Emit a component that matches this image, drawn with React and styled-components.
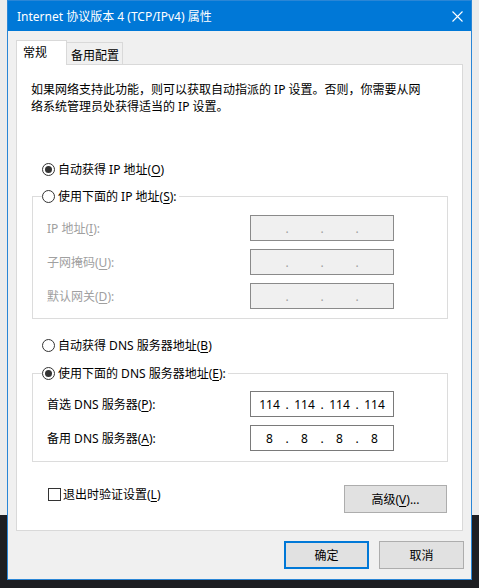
import React from 'react'
import styled, { createGlobalStyle } from 'styled-components'

const GlobalStyle = createGlobalStyle`
  html, body {
    margin: 0;
    padding: 0;
  }
  body {
    width: 479px;
    height: 588px;
    overflow: hidden;
    background: linear-gradient(to bottom, #ececec 0, #ececec 515px, #1d1e22 515px);
    font-family: "Noto Sans", "Noto Sans CJK SC", sans-serif;
    font-size: 12px;
    color: #000;
  }
`

const Desktop = styled.div`
  padding-left: 7px;
`

const Window = styled.div`
  width: 465px;
  box-sizing: border-box;
  border: 1px solid #2a86d6;
  background: #f0f0f0;
  display: flex;
  flex-direction: column;
`

const TitleBar = styled.div`
  height: 30px;
  background: #0078d7;
  color: #fff;
  display: flex;
  align-items: center;
  justify-content: space-between;
  padding: 0 8px 0 9px;
  line-height: 17px;
`

const Body = styled.div`
  padding: 9px 7px 10px 8px;
  display: flex;
  flex-direction: column;
`

const TabList = styled.div`
  display: flex;
  align-items: flex-end;
  height: 25px;
  margin-bottom: -1px;
  position: relative;
  z-index: 1;
`

const Tab = styled.div`
  box-sizing: border-box;
  height: ${p => (p.$active ? 25 : 23)}px;
  width: ${p => (p.$active ? 51 : 56)}px;
  padding: ${p => (p.$active ? '3px 0 0 6px' : '4px 0 0 4px')};
  line-height: 17px;
  background: ${p => (p.$active ? '#fff' : '#f0f0f0')};
  border: 1px solid #d9d9d9;
  border-bottom: ${p => (p.$active ? 'none' : '1px solid #d9d9d9')};
  border-left: ${p => (p.$active ? '1px solid #d9d9d9' : 'none')};
`

const Panel = styled.div`
  background: #fff;
  border: 1px solid #d9d9d9;
  margin-right: 1px;
  padding: 16px 14px 17px 15px;
  display: flex;
  flex-direction: column;
`

const Description = styled.p`
  margin: 0 0 0 -1px;
  line-height: 17px;
  white-space: nowrap;
`

const Choice = styled.label`
  display: flex;
  align-items: center;
  gap: 3px;
  line-height: 17px;
  margin: ${p => p.$top || 0}px 0 0 10px;
  white-space: nowrap;
`

const RadioMark = styled.span`
  width: 13px;
  height: 13px;
  box-sizing: border-box;
  border: 1px solid #333;
  border-radius: 50%;
  background: #fff;
  display: flex;
  align-items: center;
  justify-content: center;
  &::after {
    content: '';
    width: 7px;
    height: 7px;
    border-radius: 50%;
    background: ${p => (p.$checked ? '#333' : 'transparent')};
  }
`

const CheckMark = styled.span`
  width: 13px;
  height: 13px;
  box-sizing: border-box;
  border: 1px solid #333;
  background: #fff;
`

const Key = styled.u`
  text-decoration: underline;
  text-underline-offset: 2px;
`

const Group = styled.fieldset`
  margin: ${p => p.$top}px 0 0;
  padding: 0;
  border: 1px solid #dcdcdc;
  min-width: 0;
`

const Legend = styled.legend`
  margin-left: 9px;
  padding: 0 2px 0 0;
  & > label {
    margin: 0;
  }
`

const Fields = styled.div`
  display: grid;
  grid-template-columns: 203px 144px;
  grid-auto-rows: 26px;
  row-gap: 8px;
  padding: ${p => p.$pad};
  align-items: center;
`

const FieldLabel = styled.span`
  color: ${p => (p.$disabled ? '#a0a0a0' : '#000')};
  line-height: 17px;
  white-space: nowrap;
`

const IpBox = styled.div`
  box-sizing: border-box;
  height: 26px;
  border: 1px solid ${p => (p.$disabled ? '#8a8a8a' : '#7a7a7a')};
  background: ${p => (p.$disabled ? '#f0f0f0' : '#fff')};
  color: ${p => (p.$disabled ? '#a0a0a0' : '#000')};
  display: flex;
  align-items: center;
  padding-left: 3px;
  line-height: 17px;
`

const Octet = styled.span`
  width: 31px;
  text-align: center;
`

const Dot = styled.span`
  width: 4px;
  text-align: center;
`

const Footer = styled.div`
  display: flex;
  justify-content: space-between;
  align-items: flex-start;
  margin-top: 23px;
  & > label {
    margin: 1px 0 0 16px;
    gap: 2px;
  }
`

const Button = styled.button`
  box-sizing: border-box;
  width: ${p => p.$w || 85}px;
  height: 28px;
  margin: 0;
  padding: 0;
  font: inherit;
  color: #000;
  background: #e1e1e1;
  border: ${p => (p.$primary ? '2px solid #0078d7' : '1px solid #adadad')};
`

const Actions = styled.div`
  display: flex;
  justify-content: flex-end;
  gap: 10px;
  margin-top: 10px;
`

const Ip = ({ parts, disabled }) => (
  <IpBox $disabled={disabled}>
    {parts.map((p, i) => (
      <React.Fragment key={i}>
        {i > 0 && <Dot>.</Dot>}
        <Octet>{p}</Octet>
      </React.Fragment>
    ))}
  </IpBox>
)

const empty = ['', '', '', '']

export default function App() {
  return (
    <Desktop>
      <GlobalStyle />
      <Window>
        <TitleBar>
          <span>Internet 协议版本 4 (TCP/IPv4) 属性</span>
          <svg width="11" height="11" viewBox="0 0 11 11">
            <path d="M0.5 0.5L10.5 10.5M10.5 0.5L0.5 10.5" stroke="#fff" strokeWidth="1.1" />
          </svg>
        </TitleBar>
        <Body>
          <TabList>
            <Tab $active>常规</Tab>
            <Tab>备用配置</Tab>
          </TabList>
          <Panel>
            <Description>
              如果网络支持此功能，则可以获取自动指派的 IP 设置。否则，你需要从网
              <br />
              络系统管理员处获得适当的 IP 设置。
            </Description>

            <Choice $top={46}>
              <RadioMark $checked />
              <span>自动获得 IP 地址(<Key>O</Key>)</span>
            </Choice>

            <Group $top={10}>
              <Legend>
                <Choice>
                  <RadioMark />
                  <span>使用下面的 IP 地址(<Key>S</Key>):</span>
                </Choice>
              </Legend>
              <Fields $pad="10px 0 9px 14px">
                <FieldLabel $disabled>IP 地址(<Key>I</Key>):</FieldLabel>
                <Ip parts={empty} disabled />
                <FieldLabel $disabled>子网掩码(<Key>U</Key>):</FieldLabel>
                <Ip parts={empty} disabled />
                <FieldLabel $disabled>默认网关(<Key>D</Key>):</FieldLabel>
                <Ip parts={empty} disabled />
              </Fields>
            </Group>

            <Choice $top={18}>
              <RadioMark />
              <span>自动获得 DNS 服务器地址(<Key>B</Key>)</span>
            </Choice>

            <Group $top={11}>
              <Legend>
                <Choice>
                  <RadioMark $checked />
                  <span>使用下面的 DNS 服务器地址(<Key>E</Key>):</span>
                </Choice>
              </Legend>
              <Fields $pad="9px 0 10px 14px">
                <FieldLabel>首选 DNS 服务器(<Key>P</Key>):</FieldLabel>
                <Ip parts={['114', '114', '114', '114']} />
                <FieldLabel>备用 DNS 服务器(<Key>A</Key>):</FieldLabel>
                <Ip parts={['8', '8', '8', '8']} />
              </Fields>
            </Group>

            <Footer>
              <Choice>
                <CheckMark />
                <span>退出时验证设置(<Key>L</Key>)</span>
              </Choice>
              <Button $w={103} style={{ marginRight: 1 }}>高级(<Key>V</Key>)...</Button>
            </Footer>
          </Panel>
          <Actions>
            <Button $primary>确定</Button>
            <Button>取消</Button>
          </Actions>
        </Body>
      </Window>
    </Desktop>
  )
}
